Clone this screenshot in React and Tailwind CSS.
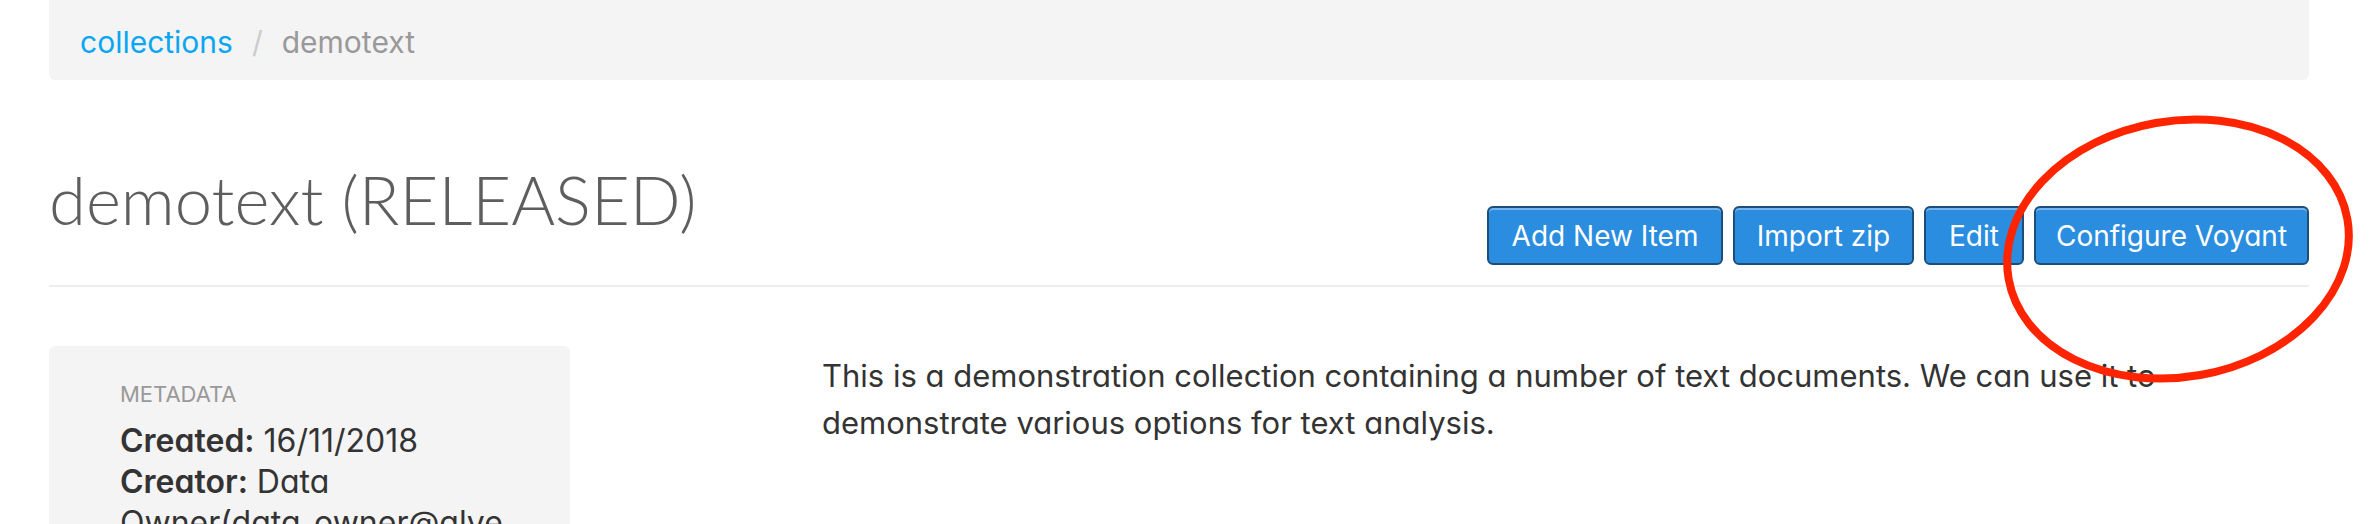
const buttons = [
  { label: 'Add New Item', w: 'w-[236px]' },
  { label: 'Import zip', w: 'w-[181px]' },
  { label: 'Edit', w: 'w-[100px]' },
  { label: 'Configure Voyant', w: 'w-[275px]' },
];

function ActionButton({ label, w }) {
  return (
    <button className={`${w} h-[59px] flex items-center justify-center rounded-[6px] border-2 border-[#1d4e7a] bg-[#2a8de0] text-white text-[28px] leading-none shadow-[inset_0_2px_0_rgba(255,255,255,0.35)]`}>
      {label}
    </button>
  );
}

function Breadcrumb() {
  return (
    <nav className="h-[80px] rounded-b-[6px] bg-[#f4f4f4] pl-[31px] pt-[5px] flex items-center text-[30px]">
      <a className="text-[#0aa6f2]">collections</a>
      <span className="px-[19px] text-[#cccccc]">/</span>
      <span className="text-[#999999]">demotext</span>
    </nav>
  );
}

export default function App() {
  return (
    <div className="relative w-[2380px] h-[524px] overflow-hidden bg-white text-[#333333] [font-family:Inter,sans-serif] [font-feature-settings:'cv11']">
      <div className="pl-[49px] pr-[71px]">
        <Breadcrumb />

        <div className="h-[207px] flex justify-between items-end border-b-2 border-[#eeeeee] pb-[20px]">
          <h1 className="self-start mt-[86px] text-[67px] leading-[67px] font-light text-[#5e5e5e] [font-family:Lato,sans-serif]">
            demotext (RELEASED)
          </h1>
          <div className="flex gap-[10px]">
            {buttons.map(b => (
              <ActionButton key={b.label} label={b.label} w={b.w} />
            ))}
          </div>
        </div>

        <div className="flex mt-[59px]">
          <aside className="w-[521px] shrink-0 rounded-[6px] bg-[#f4f4f4] pl-[71px] pr-[60px] pt-[34px] pb-[40px]">
            <div className="text-[22px] leading-[28px] text-[#999999] uppercase">Metadata</div>
            <div className="mt-[12px] text-[32px] leading-[41px] break-words">
              <div><b className="font-semibold">Created:</b> 16/11/2018</div>
              <div><b className="font-semibold">Creator:</b> Data Owner(data_owner@alveo.edu.au)</div>
            </div>
          </aside>
          <p className="ml-[252px] mt-[6px] text-[31px] leading-[47px] text-[#333333]">
            This is a demonstration collection containing a number of text documents. We can use it to
            <br />
            demonstrate various options for text analysis.
          </p>
        </div>
      </div>

      {/* hand-drawn highlight round the Voyant button */}
      <svg className="absolute left-[1995px] top-[107px] pointer-events-none" width="370" height="285" viewBox="0 0 370 285">
        <ellipse cx="183" cy="142" rx="172" ry="128" fill="none" stroke="#ff2400" strokeWidth="8" transform="rotate(-10 183 142)" />
      </svg>
    </div>
  );
}
